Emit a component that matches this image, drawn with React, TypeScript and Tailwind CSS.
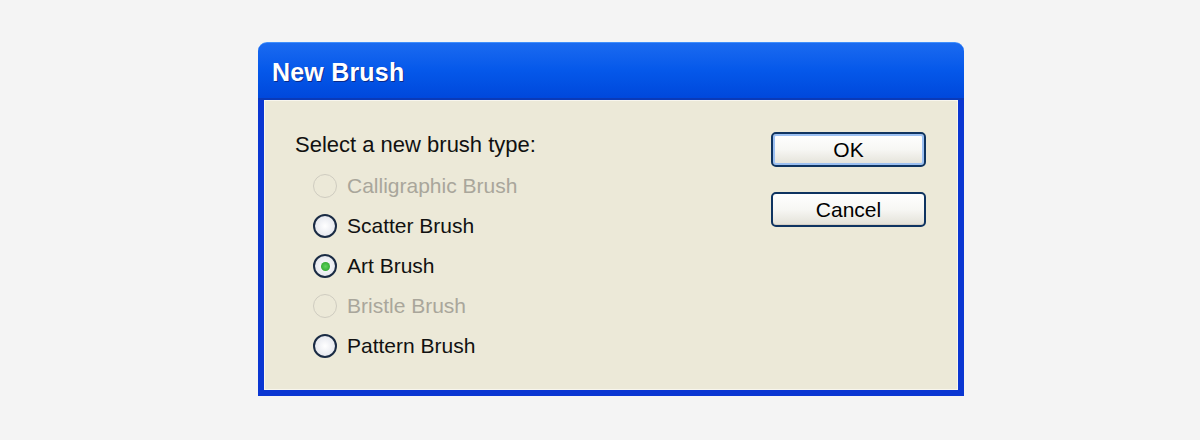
import {useState} from 'react';

type Option = {label: string; disabled?: boolean};

const options: Option[] = [
  {label: 'Calligraphic Brush', disabled: true},
  {label: 'Scatter Brush'},
  {label: 'Art Brush'},
  {label: 'Bristle Brush', disabled: true},
  {label: 'Pattern Brush'},
];

function Radio({checked, disabled}: {checked: boolean; disabled?: boolean}) {
  if (disabled) {
    return (
      <span className="w-6 h-6 rounded-full border-[1.5px] border-[#cfccc0] flex-shrink-0" />
    );
  }
  return (
    <span className="w-6 h-6 rounded-full border-2 border-[#1a2b44] bg-radial from-white to-[#dcdfe8] flex items-center justify-center flex-shrink-0">
      {checked && (
        <span className="w-[9px] h-[9px] rounded-full bg-radial from-[#5fd35f] to-[#1f9d1f]" />
      )}
    </span>
  );
}

function XpButton({label, isDefault}: {label: string; isDefault?: boolean}) {
  return (
    <button
      className={`w-[155px] h-[35px] rounded-[5px] border-2 border-[#0f3461] bg-linear-to-b from-white via-[#f7f7f4] to-[#e3e1d8] text-[21px] leading-none text-black ${
        isDefault ? 'shadow-[inset_0_0_0_2px_#9cc0f2]' : 'shadow-[inset_0_-1px_0_#d6d0c5]'
      }`}
    >
      {label}
    </button>
  );
}

function App() {
  const [selected, setSelected] = useState(2);

  return (
    <div className="w-full h-[440px] bg-[#f4f4f4] pt-[42px] pl-[258px] font-['Liberation_Sans',Arial,sans-serif]">
      <div className="w-[706px] h-[354px] flex flex-col">
        <div className="h-[58px] rounded-t-[9px] bg-linear-to-b from-[#1a6af0] via-[#0558ea] to-[#0048dc] border-t border-[#3f8ffc] border-b-2 border-b-[#0a3ab8] flex items-center pl-[14px] pt-[5px]">
          <span className="text-white font-bold text-[25px] tracking-[0.2px] [text-shadow:1px_1px_0_#0b2a8a]">
            New Brush
          </span>
        </div>
        <div className="flex-1 border-x-[6px] border-b-[6px] border-[#0a36d2] bg-[#ece9d8]">
          <div className="h-full flex justify-between border border-[#f8f6ee] pt-[31px] pl-[30px] pr-[31px]">
            <div className="flex flex-col">
              <div className="h-[26px] leading-[26px] text-[22px] text-[#111]">
                Select a new brush type:
              </div>
              <div className="flex flex-col pt-2 pl-[18px]">
                {options.map((o, i) => (
                  <div
                    key={o.label}
                    onClick={() => !o.disabled && setSelected(i)}
                    className="h-10 flex items-center gap-[10px]"
                  >
                    <Radio checked={selected === i} disabled={o.disabled} />
                    <span
                      className={`text-[21px] ${o.disabled ? 'text-[#a9a69b]' : 'text-[#111]'}`}
                    >
                      {o.label}
                    </span>
                  </div>
                ))}
              </div>
            </div>
            <div className="flex flex-col gap-[25px]">
              <XpButton label="OK" isDefault />
              <XpButton label="Cancel" />
            </div>
          </div>
        </div>
      </div>
    </div>
  );
}

export default App;
